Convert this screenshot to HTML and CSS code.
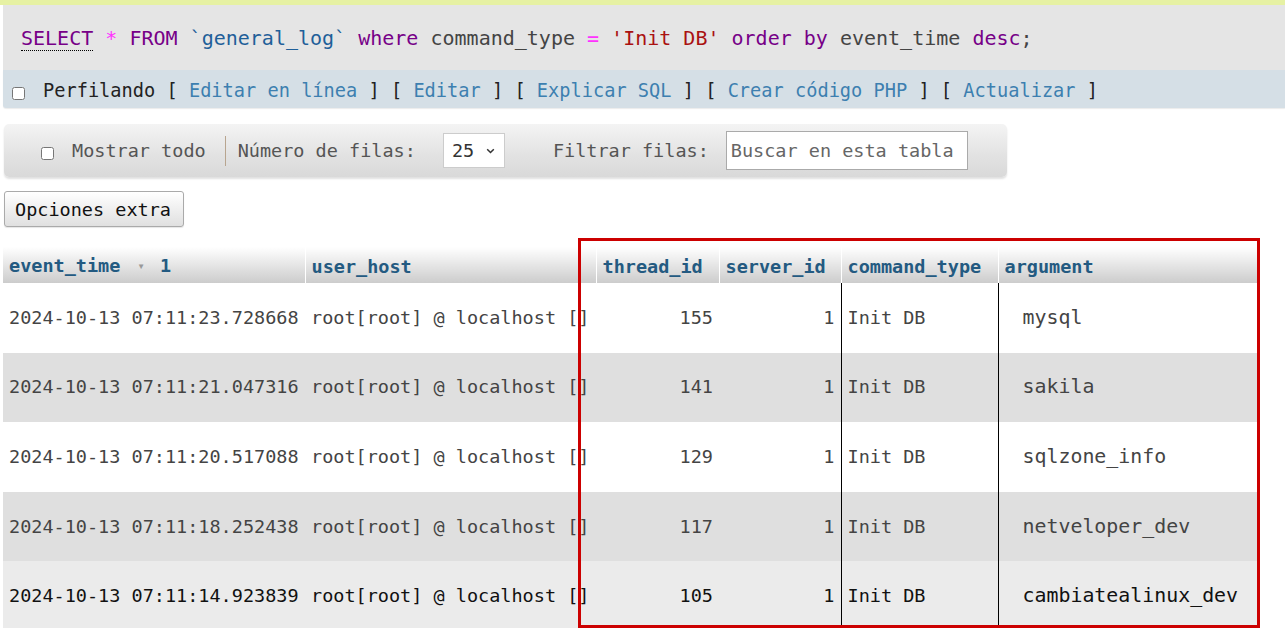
FILE: index.html
```html
<!DOCTYPE html>
<html lang="es">
<head>
<meta charset="utf-8">
<title>general_log</title>
<link rel="stylesheet" href="styles.css">
</head>
<body>
<div class="success-strip"></div>
<div class="sql-box">
  <code class="sql"><span class="kw sel">SELECT</span> <span class="op">*</span> <span class="kw">FROM</span> <span class="ident">`general_log`</span> <span class="kw">where</span> <span class="plain">command_type</span> <span class="op">=</span> <span class="str">'Init DB'</span> <span class="kw">order by</span> <span class="plain">event_time</span> <span class="kw">desc</span><span class="plain">;</span></code>
</div>
<div class="tools">
  <input type="checkbox" class="cb">
  <span class="tools-text">Perfilando [ <a class="lnk">Editar en línea</a> ] [ <a class="lnk">Editar</a> ] [ <a class="lnk">Explicar SQL</a> ] [ <a class="lnk">Crear código PHP</a> ] [ <a class="lnk">Actualizar</a> ]</span>
</div>

<div class="navbar">
  <input type="checkbox" class="cb nav-cb">
  <span class="nav-label">Mostrar todo</span>
  <span class="sep"></span>
  <span class="nav-label">Número de filas:</span>
  <span class="select-wrap">
    <select class="rows-select"><option>25</option></select>
    <svg class="chev" width="9" height="6" viewBox="0 0 9 6"><path d="M1.2 1.2 L4.5 4.5 L7.8 1.2" fill="none" stroke="#333" stroke-width="1.5"/></svg>
  </span>
  <span class="nav-label filter-label">Filtrar filas:</span>
  <input class="search" type="text" placeholder="Buscar en esta tabla">
</div>

<button class="extra-btn">Opciones extra</button>

<div class="results">
  <table class="data">
    <colgroup>
      <col class="c1"><col class="c2"><col class="c3"><col class="c4"><col class="c5"><col class="c6">
    </colgroup>
    <thead>
      <tr>
        <th>event_time <span class="sort">&#9662;</span> 1</th>
        <th>user_host</th>
        <th>thread_id</th>
        <th>server_id</th>
        <th>command_type</th>
        <th>argument</th>
      </tr>
    </thead>
    <tbody>
      <tr class="odd">
        <td>2024-10-13 07:11:23.728668</td><td>root[root] @ localhost []</td><td class="num">155</td><td class="num">1</td><td class="bl">Init DB</td><td class="bl arg">mysql</td>
      </tr>
      <tr class="even">
        <td>2024-10-13 07:11:21.047316</td><td>root[root] @ localhost []</td><td class="num">141</td><td class="num">1</td><td class="bl">Init DB</td><td class="bl arg">sakila</td>
      </tr>
      <tr class="odd">
        <td>2024-10-13 07:11:20.517088</td><td>root[root] @ localhost []</td><td class="num">129</td><td class="num">1</td><td class="bl">Init DB</td><td class="bl arg">sqlzone_info</td>
      </tr>
      <tr class="even">
        <td>2024-10-13 07:11:18.252438</td><td>root[root] @ localhost []</td><td class="num">117</td><td class="num">1</td><td class="bl">Init DB</td><td class="bl arg">netveloper_dev</td>
      </tr>
      <tr class="hover">
        <td>2024-10-13 07:11:14.923839</td><td>root[root] @ localhost []</td><td class="num">105</td><td class="num">1</td><td class="bl">Init DB</td><td class="bl arg">cambiatealinux_dev</td>
      </tr>
    </tbody>
  </table>
  <div class="highlight-box"></div>
</div>
</body>
</html>
```
FILE: styles.css
```css
html, body {
  margin: 0;
  padding: 0;
  background: #fff;
  overflow: hidden;
}
body {
  font-family: "DejaVu Sans Mono", "Liberation Mono", monospace;
  font-size: 18.5px;
  color: #444;
}
.success-strip {
  height: 5px;
  background: #e6f1a3;
}
.sql-box {
  margin-left: 3px;
  height: 65px;
  background: #e5e5e5;
  display: flex;
  align-items: center;
  padding-left: 18px;
}
.sql {
  font-family: "DejaVu Sans Mono", monospace;
  font-size: 20px;
  line-height: 24px;
  white-space: pre;
}
.kw { color: #770088; }
.sel { border-bottom: 1px dotted #000; }
.op { color: #ff33ff; }
.ident { color: #1f5f99; }
.str { color: #aa1111; }
.plain { color: #444; }

.tools {
  margin-left: 3px;
  height: 38px;
  box-sizing: border-box;
  padding-top: 3px;
  background: #d5dfe6;
  display: flex;
  align-items: center;
  padding-left: 9px;
  border-radius: 0 0 0 3px;
  box-shadow: 0 1px 1px rgba(0,0,0,0.08);
}
.cb {
  margin: 0;
  width: 13px;
  height: 13px;
}
.tools .cb {
  margin-top: 6px;
}
.tools-text {
  margin-left: 18px;
  font-size: 18.65px;
  color: #222;
  white-space: pre;
  line-height: 24px;
}
.lnk {
  color: #3d7fb0;
  text-decoration: none;
}

.navbar {
  margin: 16px 0 0 4px;
  width: 1003px;
  height: 53px;
  box-sizing: border-box;
  border-radius: 5px;
  background: linear-gradient(#f4f4f4, #e2e2e2 60%, #d9d9d9);
  box-shadow: 0 2px 2px rgba(0,0,0,0.12);
  display: flex;
  align-items: center;
  padding-left: 37px;
}
.nav-cb {
  margin-top: 5px;
}
.nav-label {
  color: #555;
  white-space: pre;
  line-height: 24px;
}
.navbar .nav-cb + .nav-label {
  margin-left: 18px;
}
.sep {
  width: 1px;
  height: 30px;
  background: #b8a58f;
  margin: 0 12px 0 19px;
}
.select-wrap {
  position: relative;
  margin-left: 27px;
  display: inline-flex;
}
.rows-select {
  appearance: none;
  -webkit-appearance: none;
  width: 62px;
  height: 35px;
  border: 1px solid #ccc;
  background: #fff;
  font-family: "DejaVu Sans Mono", monospace;
  font-size: 18.5px;
  color: #333;
  padding: 0 0 0 8px;
  border-radius: 0;
}
.chev {
  position: absolute;
  right: 10px;
  top: 15px;
  pointer-events: none;
}
.filter-label {
  margin-left: 48px;
}
.search {
  margin-left: 17px;
  width: 242px;
  height: 39px;
  box-sizing: border-box;
  border: 1px solid #aaa;
  background: #fff;
  font-family: "DejaVu Sans Mono", monospace;
  font-size: 18.5px;
  padding: 0 0 0 4px;
  color: #333;
}
.search::placeholder {
  color: #666;
}

.extra-btn {
  display: block;
  margin: 14px 0 0 4px;
  height: 36px;
  width: 180px;
  padding: 0 0 0 10px;
  text-align: left;
  font-family: "DejaVu Sans Mono", monospace;
  font-size: 18.5px;
  color: #111;
  border: 1px solid #aaa;
  border-radius: 3px;
  background: linear-gradient(#ffffff, #e0e0e0);
  box-shadow: 0 1px 1px rgba(0,0,0,0.1);
}

.results {
  position: relative;
  margin: 20px 0 0 3px;
}
.data {
  border-collapse: collapse;
  table-layout: fixed;
  width: 1254px;
}
.c1 { width: 302px; }
.c2 { width: 291px; }
.c3 { width: 123px; }
.c4 { width: 122px; }
.c5 { width: 157px; }
.c6 { width: 259px; }
.data th {
  height: 36px;
  padding: 3px 6px 0 6px;
  box-sizing: border-box;
  text-align: left;
  font-weight: bold;
  color: #235a81;
  background: linear-gradient(#ffffff, #cccccc);
  border-right: 1px solid #fff;
  white-space: pre;
  line-height: 24px;
}
.sort {
  font-size: 12px;
  color: #999;
  font-weight: normal;
  margin: 0 4px 0 6px;
  position: relative;
  top: -2px;
}
.data td {
  height: 69.6px;
  padding: 0 6px 0 6px;
  white-space: pre;
  line-height: 24px;
  box-sizing: border-box;
}
.data td.num {
  text-align: right;
}
.data td.bl {
  border-left: 1px solid #000;
}
.data td.arg {
  padding-left: 24px;
  font-size: 19.9px;
}
.odd { background: #ffffff; }
.even { background: #dfdfdf; }
.hover { background: #ebebeb; }
.hover td { color: #111; }

.highlight-box {
  position: absolute;
  left: 575px;
  top: -9px;
  width: 682px;
  height: 390px;
  box-sizing: border-box;
  border: 3px solid #cc0000;
  pointer-events: none;
}
```
